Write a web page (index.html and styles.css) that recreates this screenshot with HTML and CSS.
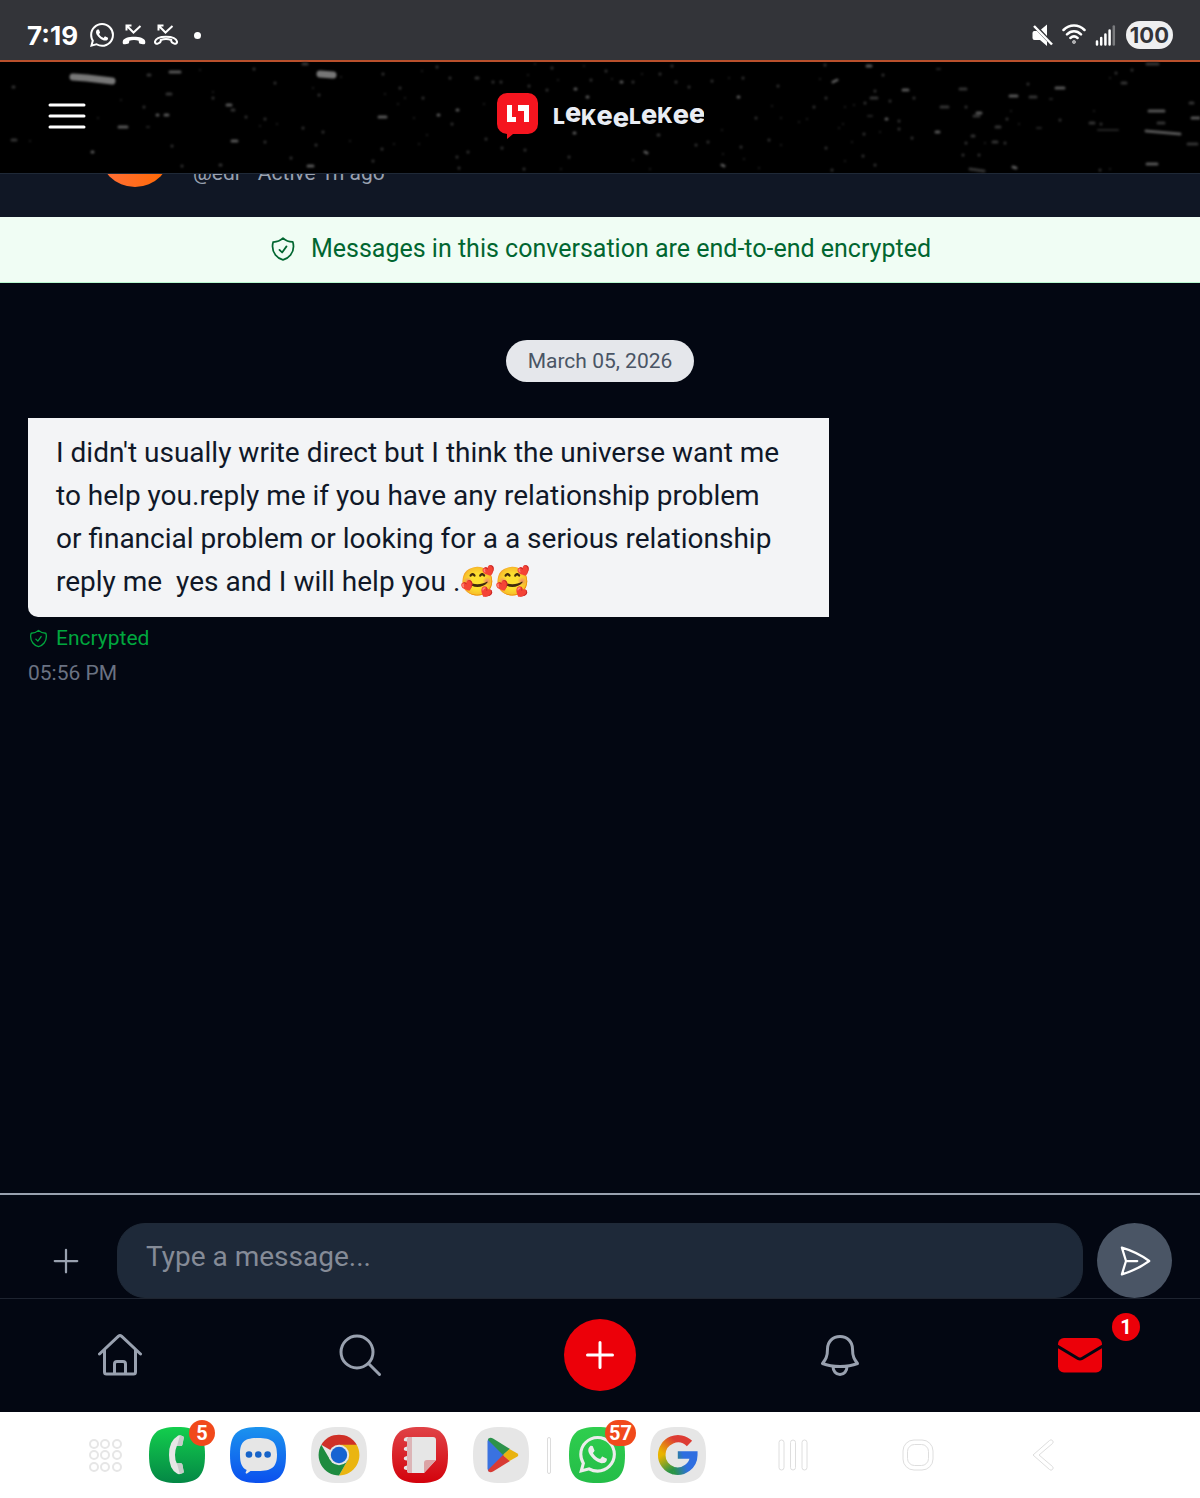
FILE: index.html
```html
<!DOCTYPE html>
<html lang="en">
<head>
  <meta charset="UTF-8">
  <meta name="viewport" content="width=device-width, initial-scale=1.0">
  <title>LeKeeLeKee - Messages</title>
  <link rel="stylesheet" href="styles.css">
</head>
<body>
  <!-- shared icons -->
  <svg class="defs" aria-hidden="true">
    <symbol id="shield" viewBox="0 0 24 24">
      <path d="M9 12.75 11.25 15 15 9.75m-3-7.036A11.959 11.959 0 0 1 3.598 6 11.99 11.99 0 0 0 3 9.749c0 5.592 3.824 10.29 9 11.623 5.176-1.332 9-6.03 9-11.622 0-1.31-.21-2.571-.598-3.751h-.152c-3.196 0-6.1-1.248-8.25-3.285Z" fill="none" stroke="currentColor" stroke-width="1.5" stroke-linecap="round" stroke-linejoin="round"/>
    </symbol>
    <symbol id="whatsapp" viewBox="0 0 24 24">
      <path fill="currentColor" d="M17.472 14.382c-.297-.149-1.758-.867-2.03-.967-.273-.099-.471-.148-.67.15-.197.297-.767.966-.94 1.164-.173.199-.347.223-.644.075-.297-.15-1.255-.463-2.39-1.475-.883-.788-1.48-1.761-1.653-2.059-.173-.297-.018-.458.13-.606.134-.133.298-.347.446-.52.149-.174.198-.298.298-.497.099-.198.05-.371-.025-.52-.075-.149-.669-1.612-.916-2.207-.242-.579-.487-.5-.669-.51-.173-.008-.371-.01-.57-.01-.198 0-.52.074-.792.372-.272.297-1.04 1.016-1.04 2.479 0 1.462 1.065 2.875 1.213 3.074.149.198 2.096 3.2 5.077 4.487.709.306 1.262.489 1.694.625.712.227 1.36.195 1.871.118.571-.085 1.758-.719 2.006-1.413.248-.694.248-1.289.173-1.413-.074-.124-.272-.198-.57-.347m-5.421 7.403h-.004a9.87 9.87 0 01-5.031-1.378l-.361-.214-3.741.982.998-3.648-.235-.374a9.86 9.86 0 01-1.51-5.26c.001-5.45 4.436-9.884 9.888-9.884 2.64 0 5.122 1.03 6.988 2.898a9.825 9.825 0 012.893 6.994c-.003 5.45-4.437 9.884-9.885 9.884m8.413-18.297A11.815 11.815 0 0012.05 0C5.495 0 .16 5.335.157 11.892c0 2.096.547 4.142 1.588 5.945L.057 24l6.305-1.654a11.882 11.882 0 005.683 1.448h.005c6.554 0 11.89-5.335 11.893-11.893a11.821 11.821 0 00-3.48-8.413z"/>
    </symbol>
    <symbol id="squircle" viewBox="0 0 56 56">
      <path d="M28 0C49 0 56 7 56 28S49 56 28 56 0 49 0 28 7 0 28 0z"/>
    </symbol>
  </svg>

  <div class="status-bar">
    <div class="status-left">
      <span class="clock">7:19</span>
      <svg class="status-icon" viewBox="0 0 24 24"><use href="#whatsapp"/></svg>
      <svg class="status-icon" viewBox="0 0 24 24">
        <path d="M.8 18.2C2 12.4 22 12.4 23.2 18.2c.5 2.5-.6 3.4-2.3 3.1l-2.7-.6c-1.3-.3-1.4-1.2-1.5-3-3-1.1-6.4-1.1-9.4 0-.1 1.8-.2 2.7-1.5 3l-2.7.6C1.4 21.6.3 20.7.8 18.2z" fill="currentColor"/>
        <path d="M4.5 7.5V2.500h5M5 3l6.500 6.500L18.500 3" fill="none" stroke="currentColor" stroke-width="2"/>
      </svg>
      <svg class="status-icon" viewBox="0 0 24 24">
        <path d="M1 18.5C2.5 12 21.5 12 23 18.5c.3 1.600-1.300 2.600-2.800 2.100-2.200-.7-3.200-2-3-3.600-3.200-1.300-7.200-1.300-10.400 0 .2 1.600-.8 2.900-3 3.600-1.500.5-3.100-.5-2.800-2.100z" fill="none" stroke="currentColor" stroke-width="2"/>
        <path d="M4.5 7.500V2.500h5M5 3l6.500 6.500L18.500 3" fill="none" stroke="currentColor" stroke-width="2"/>
      </svg>
      <span class="status-dot"></span>
    </div>
    <div class="status-right">
      <svg class="status-icon" viewBox="0 0 24 24">
        <path d="M4 8h3L17 18.500V23l-7-6H4.500a2 2 0 0 1-2-2v-5A2 2 0 0 1 4 8zM11 6.500l6-5v11.500z" fill="currentColor"/>
        <path d="M4 3l18 18.500" stroke="currentColor" stroke-width="2.500"/>
      </svg>
      <svg class="status-icon" viewBox="0 0 24 24" fill="none" stroke="currentColor" stroke-width="2.500" stroke-linecap="round">
        <path d="M1.500 7c6-6 15-6 21 0M5 11.300c4.200-4 9.800-4 14 0M8.400 15c2.200-2 5-2 7.200 0"/>
        <circle cx="12" cy="19" r=".5"/>
      </svg>
      <svg class="status-icon" viewBox="0 0 24 24" stroke="currentColor" stroke-width="2.500" stroke-linecap="round">
        <path d="M3 18.500v3M7.200 15v6.500M11.400 11.500v10M15.600 7.500v14"/>
        <path d="M19.800 3.500v18" opacity=".35"/>
      </svg>
      <span class="battery">100</span>
    </div>
  </div>

  <header class="app-header">
    <svg class="stars" viewBox="0 0 1200 111" preserveAspectRatio="xMidYMid slice" aria-hidden="true">
      <g stroke="#777" stroke-width="7" stroke-linecap="round">
        <path d="M73 15l14 1M87 16l25 3M320 12l13 1"/>
      </g>
      <g stroke="#555" stroke-width="3" stroke-linecap="round">
        <path d="M170 10h10M227 43h4M379 55h7M308 104h5M119 65h8M157 53h1M165 53h3M232 79h5M92 90h1M457 48h1M438 53h1M738 35h1M574 71h1M645 90l2 1M575 27h1M587 35h1M621 20h1M722 103l2 1M903 28h5M833 20l4-2M867 4h4M886 57h1M977 51h4M1010 34h7M1056 26h8M1149 49h15M1146 69l34 3M1192 56h9M1147 102h10M1013 105l3 1M936 70h3"/>
      </g>
      <g stroke="#333" stroke-width="3" stroke-linecap="round">
        <path d="M13 25h1M12 78h4M148 13h2M144 45h0M265 57h0M232 48h2M167 32h4M172 84h0M182 104h0M220 103h1M254 7h0M275 21h0M319 33h0M303 2h4M383 12h0M246 55h0M265 80h0M303 66h0M323 70h0M316 83h0M382 87h0M373 99h0M291 96h0M213 36h0M400 26h0M437 5h0M450 16h0M476 16h2M423 36h0M452 62h0M493 20h0M501 20h0M529 24h0M552 6h0M547 28h0M591 18h0M606 9h0M633 20h0M660 12h0M672 4h0M676 20h0M689 25h0M712 19h0M743 16h0M778 24h0M756 56h0M696 83h0M708 80h0M741 85h0M769 78h0M658 73h1M569 95h0M525 88h0M502 86h0M468 90h0M457 95h0M459 106h0M524 107h0M486 77h0M814 45h0M826 36h0M865 41h0M871 36h6M890 39h0M875 29h0M883 13h0M825 3h0M864 72h0M899 59h0M899 67h0M912 76h0M826 86h0M863 94h0M832 108h0M875 103h0M914 36h0M941 45h7M960 27h6M974 54h5M966 45h0M1007 57h0M1028 22h0M1030 35h6M996 65h4M972 74h2M966 81h0M993 80h4M1005 81h0M963 93h0M979 93h0M1060 58h0M1090 61h4M1101 62h0M1116 11h0M1122 21h4M1132 8h0M1147 2h11M1190 41h3M1158 61h6M1188 82h9M1100 108h0M970 107l14 2"/>
      </g>
      <g stroke="#242424" stroke-width="2" stroke-linecap="round">
        <path d="M30 79h0M98 56h0M121 38h0M147 65h2M200 8h0M313 26h0M341 15h0M260 64h0M277 62h0M350 79h0M394 82h0M213 30h0M398 42h0M385 32h0M422 9h0M405 36h0M414 56h0M427 73h0M419 82h0M484 42h0M528 13h0M535 2h0M558 18h0M584 4h0M612 17h0M642 12h0M729 16h0M772 44h0M781 56h0M799 60h0M722 68h0M723 92h0M744 97h0M781 83h0M759 106h0M650 107h0M633 98h0M561 107h0M807 57h0M845 45h0M854 43h0M820 17h0M868 54h4M845 99h0M1019 62h0M1011 49h0M985 81h0M1037 66h4M1094 49h0M1110 16h0M1110 107h0M937 7h3M843 62h0M852 80h0M839 66h0M880 70h0M1098 68h20M1050 37h2"/>
      </g>
    </svg>
    <button class="menu-btn" aria-label="Open menu">
      <svg class="icon-menu" viewBox="0 0 38 38" fill="none" stroke="currentColor" stroke-width="3" stroke-linecap="round"><path d="M2 8h34M2 19h34M2 30h34"/></svg>
    </button>
    <a class="brand" href="#" aria-label="LeKeeLeKee">
      <svg class="brand-logo" viewBox="0 0 208 48">
        <path d="M11 1h21a10 10 0 0 1 10 10v21a10 10 0 0 1-10 10H17l-6 5v-5A10 10 0 0 1 1 32V11A10 10 0 0 1 11 1z" fill="#f5151f"/>
        <path d="M11 13h5v12h4v5h-9zM22 13h11v17h-5V19h-6z" fill="#fff"/>
        <text class="brand-text" x="57" y="32 30 33 33 35 32 32 31 32 31"><tspan class="cap">L</tspan>e<tspan class="cap">K</tspan>ee<tspan class="cap">L</tspan>e<tspan class="cap">K</tspan>ee</text>
      </svg>
    </a>
  </header>

  <div class="contact">
    <div class="avatar"></div>
    <p class="contact-meta">@edr · Active 1h ago</p>
  </div>

  <div class="notice">
    <svg class="notice-icon"><use href="#shield"/></svg>
    <span>Messages in this conversation are end-to-end encrypted</span>
  </div>

  <main class="chat">
    <div class="date-pill">March 05, 2026</div>
    <div class="message">
      <p class="bubble">I didn't usually write direct but I think the universe want me to help you.reply me if you have any relationship problem or financial problem or looking for a a serious relationship reply me  yes and I will help you .🥰🥰</p>
      <div class="encrypted">
        <svg class="encrypted-icon"><use href="#shield"/></svg>
        <span>Encrypted</span>
      </div>
      <time class="time">05:56 PM</time>
    </div>
  </main>

  <form class="composer">
    <button type="button" class="attach-btn" aria-label="Add attachment">
      <svg class="icon-36" viewBox="0 0 24 24" fill="none" stroke="currentColor" stroke-width="1.5" stroke-linecap="round"><path d="M12 4.500v15m7.500-7.500h-15"/></svg>
    </button>
    <textarea class="message-input" rows="1" placeholder="Type a message..." aria-label="Message"></textarea>
    <button type="submit" class="send-btn" aria-label="Send">
      <svg class="icon-36" viewBox="0 0 24 24" fill="none" stroke="currentColor" stroke-width="1.5" stroke-linecap="round" stroke-linejoin="round"><path d="M6 12 3.269 3.125A59.769 59.769 0 0 1 21.485 12 59.768 59.768 0 0 1 3.270 20.875L5.999 12Zm0 0h7.500"/></svg>
    </button>
  </form>

  <nav class="tab-bar">
    <a href="#" aria-label="Home">
      <svg class="tab-icon" viewBox="0 0 44 44"><path d="M1.500 21 20.500 3.200q1.500-1.200 3 0L42.500 21M6.500 17v22q0 2 2 2h27q2 0 2-2V17M16.500 41V31q0-2.500 2.500-2.500h6q2.500 0 2.500 2.500v10"/></svg>
    </a>
    <a href="#" aria-label="Search">
      <svg class="tab-icon" viewBox="0 0 44 44"><circle cx="19" cy="19" r="16"/><path d="M30.500 30.500l11 11"/></svg>
    </a>
    <a href="#" aria-label="Create post">
      <span class="create"><svg class="create-icon" viewBox="0 0 44 44"><path d="M22 9.500v25M9.500 22h25"/></svg></span>
    </a>
    <a href="#" aria-label="Notifications">
      <svg class="tab-icon" viewBox="0 0 44 44"><path d="M22 3.500c-7.500 0-12.500 5.500-12.500 12.500 0 8-2 10.500-5 14.500 5 2 11 3 17.500 3s12.500-1 17.500-3c-3-4-5-6.500-5-14.500C34.500 9 29.500 3.500 22 3.500zM15 33.500c0 4.500 3 8 7 8s7-3.500 7-8"/></svg>
    </a>
    <a href="#" aria-label="Messages">
      <span class="tab-badge-wrap">
        <svg class="mail-icon" viewBox="0 0 44 44"><rect y="5" width="44" height="34.500" rx="6" fill="#ec0009"/><path d="M-1 13 20 25.500q2 1.200 4 0L45 13" fill="none" stroke="#030712" stroke-width="3"/></svg>
        <span class="tab-badge">1</span>
      </span>
    </a>
  </nav>

  <footer class="dock">
    <button class="dock-apps" aria-label="All apps">
      <svg viewBox="0 0 38 38" fill="none" stroke="#e6e6e6" stroke-width="2">
        <circle cx="8" cy="8" r="4"/><circle cx="19" cy="8" r="4"/><circle cx="31" cy="8" r="4"/>
        <circle cx="8" cy="19" r="4"/><circle cx="19" cy="19" r="4"/><circle cx="31" cy="19" r="4"/>
        <circle cx="8" cy="31" r="4"/><circle cx="19" cy="31" r="4"/><circle cx="31" cy="31" r="4"/>
      </svg>
    </button>
    <button class="app" aria-label="Phone">
      <svg viewBox="0 0 56 56">
        <linearGradient id="g-phone" x2="0" y2="1"><stop stop-color="#13ce4d"/><stop offset="1" stop-color="#048745"/></linearGradient>
        <use href="#squircle" fill="url(#g-phone)"/>
        <path d="M28 9.500Q20 14 20 28t8 18.500q1.500 1 3 .5l3-1q1-.5.7-1.500l-1.400-7q-.3-1.200-1.500-1.200h-4Q26 33 26 28t1.800-9h4q1.200 0 1.500-1.200l1.400-7q.3-1-.7-1.500l-3-1q-1.500-.5-3 1.200z" fill="#e6e6e6"/>
        <path d="M28 19h4q1.200 0 1.500-1.200l1.400-7q.1-1-.9-1.500l-3-1zM28 36.500h4q1.200 0 1.500 1.200l1.200 6.800q.1 1-.9 1.500l-3 1z" fill="#c6cbc8"/>
      </svg>
      <span class="app-badge">5</span>
    </button>
    <button class="app" aria-label="Messages">
      <svg viewBox="0 0 56 56">
        <linearGradient id="g-msg" x2="0" y2="1"><stop stop-color="#1b93ee"/><stop offset="1" stop-color="#0b50ee"/></linearGradient>
        <use href="#squircle" fill="url(#g-msg)"/>
        <path d="M28 11c14 0 19 4 19 16.500S42 44 28 44h-7.500L17 46.500c-1 .5-1.700-.2-1.300-1.200l1-2.300C11.500 40.500 10 35.500 10 27.500 10 15 14 11 28 11z" fill="#e6e6e6"/>
        <g fill="#1663c9"><circle cx="19" cy="27.500" r="3.300"/><circle cx="28.300" cy="27.500" r="3.300"/><circle cx="37.600" cy="27.500" r="3.300"/></g>
      </svg>
    </button>
    <button class="app" aria-label="Chrome">
      <svg viewBox="0 0 56 56">
        <use href="#squircle" fill="#e6e6e6"/>
        <g transform="translate(28 28)">
          <path d="M0 0-17.700-10.200A20.500 20.500 0 0 1 17.700-10.200z" fill="#cf3027"/>
          <path d="M0-10.200h17.700A20.500 20.500 0 0 1 0 20.500L8.800 5.100z" fill="#eab511"/>
          <path d="M0 20.500A20.500 20.500 0 0 1-17.700-10.200L-8.800 5.100 8.800 5.100z" fill="#1e8b3f"/>
          <circle r="10.200" fill="#e6e6e6"/><circle r="8.200" fill="#1864d2"/>
        </g>
      </svg>
    </button>
    <button class="app" aria-label="Notes">
      <svg viewBox="0 0 56 56">
        <linearGradient id="g-notes" x2="0" y2="1"><stop stop-color="#e04347"/><stop offset="1" stop-color="#d3020c"/></linearGradient>
        <use href="#squircle" fill="url(#g-notes)"/>
        <path d="M17 10h24q3 0 3 3v20L32 46H17q-2 0-2-3-4 0-3-3 0-1 3-1.500v-5q-4 0-3-3 0-1 3-1.500v-5q-4 0-3-3 0-1 3-1.500v-5q-4 0-3-2.500 0-1.500 3-2z" fill="#e6e6e6"/>
        <path d="M16 10h4v36h-3q-2 0-2-3V12z" fill="#dcb5b7"/>
        <path d="M32 46V36q0-3 3-3h9z" fill="#dba3a5"/>
      </svg>
    </button>
    <button class="app" aria-label="Play Store">
      <svg viewBox="0 0 56 56">
        <use href="#squircle" fill="#e6e6e6"/>
        <path d="M16 11.500q-1.500 1-1.500 3v27q0 2 1.500 3L31.500 28z" fill="#3a72e0"/>
        <path d="M15.500 11.500q2-1.500 4.500 0l17 10.500L30 28 15 13z" fill="#2d924b"/>
        <path d="M15.500 44.500q2 1.500 4.500 0l17-10.500L30 28 15 43z" fill="#d83b34"/>
        <path d="M36.500 22l7.500 4.200q2.600 1.800 0 3.600L36.500 34l-6.500-6z" fill="#e9b30f"/>
      </svg>
    </button>
    <span class="dock-divider"></span>
    <button class="app" aria-label="WhatsApp">
      <svg viewBox="0 0 56 56">
        <linearGradient id="g-wa" x2="0" y2="1"><stop stop-color="#2fce4e"/><stop offset="1" stop-color="#24bd48"/></linearGradient>
        <use href="#squircle" fill="url(#g-wa)"/>
        <use href="#whatsapp" x="10" y="9" width="37" height="37" color="#ececec"/>
      </svg>
      <span class="app-badge wide">57</span>
    </button>
    <button class="app" aria-label="Google">
      <svg viewBox="0 0 56 56">
        <linearGradient id="g1" gradientUnits="userSpaceOnUse" x1="24" y1="12" x2="12" y2="26"><stop stop-color="#dd3c34"/><stop offset="1" stop-color="#e9b400"/></linearGradient>
        <linearGradient id="g2" gradientUnits="userSpaceOnUse" x1="12" y1="28" x2="22" y2="43"><stop stop-color="#e9b400"/><stop offset="1" stop-color="#2a9447"/></linearGradient>
        <linearGradient id="g3" gradientUnits="userSpaceOnUse" x1="24" y1="44" x2="37" y2="40"><stop stop-color="#2a9447"/><stop offset="1" stop-color="#2f6ee0"/></linearGradient>
        <use href="#squircle" fill="#e6e6e6"/>
        <g fill="none" stroke-width="7.500">
          <path d="M39.500 16.500A16.300 16.300 0 0 0 11.700 28" stroke="url(#g1)"/>
          <path d="M11.700 27.500A16.300 16.300 0 0 0 24 43.800" stroke="url(#g2)"/>
          <path d="M23.500 43.700A16.300 16.300 0 0 0 43.800 28h-16" stroke="url(#g3)"/>
        </g>
      </svg>
    </button>
    <div class="system-nav">
      <button aria-label="Recent apps"><svg class="sys-icon" viewBox="0 0 34 34"><rect x="3" y="2" width="5" height="30" rx="2.500"/><rect x="14.500" y="2" width="5" height="30" rx="2.500"/><rect x="26" y="2" width="5" height="30" rx="2.500"/></svg></button>
      <button aria-label="Home screen"><svg class="sys-icon" viewBox="0 0 34 34"><rect x="2" y="2" width="30" height="30" rx="11"/><rect x="6.500" y="6.500" width="21" height="21" rx="7"/></svg></button>
      <button aria-label="Back"><svg class="sys-icon" viewBox="0 0 34 34"><path d="M7 17 23.500 2.500a2 2 0 0 1 3 3L13 17l13.500 11.500a2 2 0 0 1-3 3z"/></svg></button>
    </div>
  </footer>
</body>
</html>
```
FILE: styles.css
```css
* {
  box-sizing: border-box;
}

body {
  margin: 0;
  min-height: 100vh;
  display: flex;
  flex-direction: column;
  background: #030712;
  color: white;
  font-family: Roboto, "Noto Sans", sans-serif;
  font-size: 28px;
}

button {
  margin: 0;
  padding: 0;
  border: 0;
  background: none;
  color: inherit;
  font: inherit;
}

svg {
  display: block;
}

p {
  margin: 0;
}

.defs {
  position: absolute;
  width: 0;
  height: 0;
}

/* phone status bar */
.status-bar {
  display: flex;
  justify-content: space-between;
  align-items: center;
  height: 62px;
  padding: 10px 27px 0;
  background: #333439;
  border-bottom: 2px solid #b9502c;
}

.status-left,
.status-right {
  display: flex;
  align-items: center;
  gap: 8px;
}

.clock {
  margin-right: 4px;
  font-family: Inter, sans-serif;
  font-size: 26px;
  font-weight: 700;
}

.status-icon {
  width: 24px;
  height: 24px;
}

.status-dot {
  width: 7px;
  height: 7px;
  margin-left: 8px;
  border-radius: 50%;
  background: white;
}

.battery {
  padding: 0 4px;
  border-radius: 14px;
  background: #efeff0;
  color: #333439;
  font-family: Inter, sans-serif;
  font-size: 22px;
  font-weight: 700;
  line-height: 28px;
}

/* app header */
.app-header {
  position: relative;
  z-index: 1;
  display: grid;
  grid-template-columns: 1fr auto 1fr;
  align-items: center;
  height: 112px;
  padding: 0 48px 3px;
  background: black;
  border-bottom: 1px solid #1f2937;
}

.stars {
  position: absolute;
  inset: 0;
  width: 100%;
  height: 100%;
  filter: blur(1px);
}

.menu-btn,
.brand {
  position: relative;
  justify-self: start;
}

.icon-menu {
  width: 38px;
  height: 38px;
}

.brand-logo {
  width: 208px;
  height: 48px;
}

.brand-text {
  fill: #e9edf4;
  font-family: Inter, sans-serif;
  font-size: 27px;
  font-weight: 800;
}

.brand-text .cap {
  font-size: 21px;
}

/* contact bar, its upper part is scrolled under the header */
.contact {
  display: flex;
  align-items: flex-end;
  gap: 22px;
  height: 129px;
  margin-top: -86px;
  padding: 0 28px 30px 99px;
  background: #101725;
}

.avatar {
  width: 72px;
  height: 72px;
  border-radius: 50%;
  background: linear-gradient(90deg, #ff6f3c, #ff6900);
}

.contact-meta {
  color: #99a1af;
  font-size: 21px;
  line-height: 28px;
}

.notice {
  display: flex;
  justify-content: center;
  align-items: center;
  gap: 14px;
  height: 66px;
  padding: 0 28px 2px;
  background: #f0fdf4;
  border-bottom: 1px solid #b9f8cf;
  color: #016630;
  font-size: 25px;
}

.notice-icon {
  width: 28px;
  height: 28px;
}

/* conversation */
.chat {
  flex: 1;
  display: flex;
  flex-direction: column;
  align-items: flex-start;
  padding: 57px 28px 28px;
}

.date-pill {
  align-self: center;
  margin-bottom: 36px;
  padding: 0 22px;
  border-radius: 21px;
  background: #e5e7eb;
  color: #4a5565;
  font-size: 21px;
  line-height: 42px;
}

.message {
  max-width: 70%;
}

.bubble {
  padding: 13px 42px 14px 28px;
  border-radius: 0 0 0 10px;
  background: #f3f4f6;
  color: #101828;
  line-height: 43px;
  white-space: pre-wrap;
}

.encrypted {
  display: flex;
  align-items: center;
  gap: 7px;
  margin-top: 7px;
  color: #00a63e;
  font-size: 21px;
  line-height: 28px;
}

.encrypted-icon {
  width: 21px;
  height: 21px;
}

.time {
  display: block;
  margin-top: 7px;
  color: #6a7282;
  font-size: 21px;
  line-height: 28px;
}

/* message composer */
.composer {
  display: flex;
  gap: 14px;
  padding: 28px 28px 0;
  border-top: 2px solid #99a1af;
}

.attach-btn,
.send-btn {
  display: flex;
  justify-content: center;
  align-items: center;
  width: 75px;
  height: 75px;
  border-radius: 50%;
}

.attach-btn {
  color: #99a1af;
}

.send-btn {
  background: #4a5565;
}

.icon-36 {
  width: 36px;
  height: 36px;
}

.message-input {
  flex: 1;
  height: 75px;
  padding: 12px 28px;
  border: 1px solid #1f2937;
  border-radius: 28px;
  background: #1e2939;
  color: white;
  font: inherit;
  line-height: 42px;
  resize: none;
}

.message-input::placeholder {
  color: #858b97;
}

/* bottom tabs */
.tab-bar {
  display: grid;
  grid-template-columns: repeat(5, 1fr);
  height: 114px;
  padding-bottom: 2px;
  border-top: 1px solid #1e2430;
}

.tab-bar a {
  display: flex;
  justify-content: center;
  align-items: center;
  color: #99a1af;
  text-decoration: none;
}

.tab-icon,
.create-icon {
  width: 44px;
  height: 44px;
  fill: none;
  stroke: currentColor;
  stroke-width: 3;
  stroke-linecap: round;
  stroke-linejoin: round;
}

.create {
  display: flex;
  justify-content: center;
  align-items: center;
  width: 72px;
  height: 72px;
  border-radius: 50%;
  background: #ec0009;
  color: white;
}

.tab-badge-wrap {
  position: relative;
}

.mail-icon {
  width: 44px;
  height: 44px;
}

.tab-badge {
  position: absolute;
  top: -20px;
  right: -38px;
  width: 28px;
  height: 28px;
  border-radius: 50%;
  background: #ec0009;
  color: white;
  font-size: 20px;
  font-weight: 700;
  line-height: 28px;
  text-align: center;
}

/* phone dock */
.dock {
  display: flex;
  align-items: center;
  gap: 25px;
  height: 86px;
  padding: 0 95px 0 86px;
  background: white;
}

.dock-apps {
  width: 38px;
  height: 38px;
}

.app {
  position: relative;
  width: 56px;
  height: 56px;
}

.app-badge {
  position: absolute;
  top: -7px;
  right: -10px;
  width: 26px;
  height: 26px;
  border-radius: 13px;
  background: #f1491b;
  color: white;
  font-size: 20px;
  font-weight: 700;
  line-height: 26px;
  text-align: center;
}

.app-badge.wide {
  right: -11px;
  width: 31px;
}

.dock-divider {
  width: 4px;
  height: 37px;
  margin: 0 -7px;
  border: 1px solid #dcdcdc;
  border-radius: 2px;
}

.system-nav {
  flex: 1;
  display: grid;
  grid-template-columns: repeat(3, 1fr);
}

.system-nav button {
  display: flex;
  justify-content: center;
}

.sys-icon {
  width: 34px;
  height: 34px;
  fill: none;
  stroke: #dedede;
  stroke-width: 1;
}
```
